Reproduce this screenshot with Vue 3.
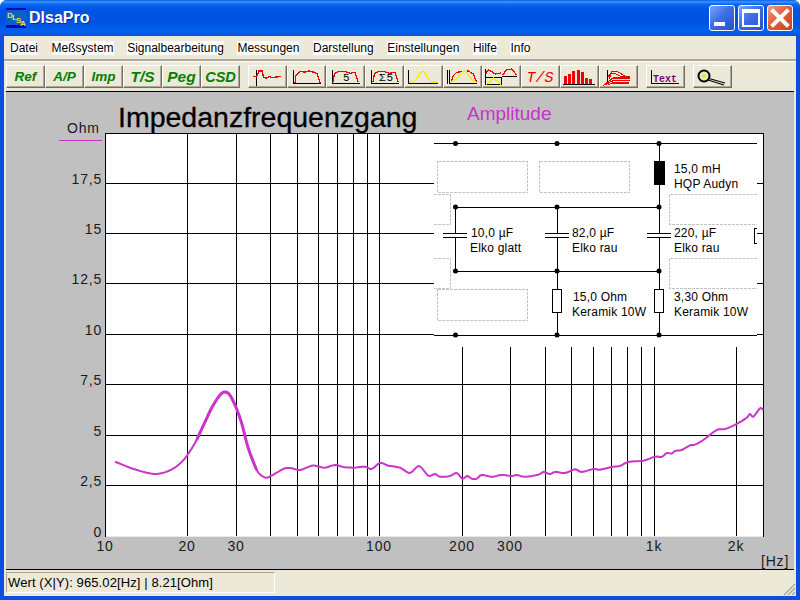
<script setup>
const menus = ['Datei', 'Meßsystem', 'Signalbearbeitung', 'Messungen', 'Darstellung', 'Einstellungen', 'Hilfe', 'Info']
const textButtons = [
  { t: 'Ref', c: 'small' }, { t: 'A/P', c: 'small' }, { t: 'Imp', c: 'small' },
  { t: 'T/S', c: 'big' }, { t: 'Peg', c: 'big' }, { t: 'CSD', c: 'mid' }
]
const hLines = [183, 233, 283, 334, 384, 435, 485]
const vLines = [187, 236, 270, 297, 318, 337, 353, 367, 379, 462, 510, 545, 571, 593, 611, 627, 641, 654, 736]
const yLabels = [['17,5', 184], ['15', 234], ['12,5', 284], ['10', 335], ['7,5', 385], ['5', 436], ['2,5', 486], ['0', 537]]
const xLabels = [['10', 105], ['20', 187], ['30', 236], ['100', 379], ['200', 462], ['300', 510], ['1k', 654], ['2k', 736]]

const left = [[345,275],[390,293],[435,307],[470,312],[505,303],[535,285],[560,258],[590,210],[620,145],[640,105],[665,70],[685,70],[705,105],[725,160],[745,235],[770,300],[790,320],[805,322],[830,308],[855,295],[875,295],[900,300],[935,287],[950,288],[975,293],[1005,285],[1030,291],[1060,293],[1095,290],[1115,297],[1140,279],[1165,287],[1200,293]]
const right = [[30,309],[57,288],[85,317],[105,312],[120,320],[150,318],[170,309],[187,326],[202,318],[215,326],[230,326],[245,315],[275,320],[305,315],[335,318],[350,315],[375,320],[415,314],[430,306],[450,312],[465,306],[495,309],[525,298],[545,306],[580,297],[600,299],[640,290],[660,288],[685,276],[730,272],[765,260],[785,261],[800,249],[815,251],[825,243],[845,240],[870,226],[885,224],[910,210],[950,180],[975,177],[1010,162],[1040,143],[1050,132],[1060,140],[1080,115],[1090,120]]
const toXY = (p, ox) => [p[0] / 3 + ox, p[1] / 3 + 370]
function smooth(pts) {
  const out = []
  for (let i = 0; i < pts.length - 1; i++) {
    const a = pts[Math.max(i - 1, 0)], b = pts[i], c = pts[i + 1], d = pts[Math.min(i + 2, pts.length - 1)]
    for (let k = 0; k < 4; k++) {
      const t = k / 4, t2 = t * t, t3 = t2 * t
      const f = j => 0.5 * (2 * b[j] + (c[j] - a[j]) * t + (2 * a[j] - 5 * b[j] + 4 * c[j] - d[j]) * t2 + (3 * b[j] - a[j] - 3 * c[j] + d[j]) * t3)
      out.push([f(0), f(1)])
    }
  }
  out.push(pts[pts.length - 1])
  return out
}
const str = a => a.map(p => p[0].toFixed(1) + ',' + p[1].toFixed(1)).join(' ')
const curve = str(smooth(left.map(p => toXY(p, 0)).concat(right.map(p => toXY(p, 400)))))
const peak = str(smooth(left.slice(7, 16).map(p => toXY(p, 0))))

const nodes = [[455.5,143.5],[557,143.5],[659,143.5],[455.5,207],[557,207],[659,207],[455.5,271],[557,271],[659,271],[455.5,335],[557,335],[659,335]]
const notes = [
  [674, 173, '15,0 mH'], [674, 188, 'HQP Audyn'],
  [471, 237, '10,0 µF'], [470, 252, 'Elko glatt'],
  [572, 237, '82,0 µF'], [572, 252, 'Elko rau'],
  [674, 237, '220, µF'], [674, 252, 'Elko rau'],
  [573, 301, '15,0 Ohm'], [572, 316, 'Keramik 10W'],
  [674, 301, '3,30 Ohm'], [674, 316, 'Keramik 10W']
]
const bars = [[4,11],[8,9],[12,6],[17,5],[21,7],[25,13],[29,14]]
</script>

<template>
  <div class="window">
    <header class="titlebar">
      <svg class="logo" width="20" height="20" viewBox="0 0 20 20">
        <rect y="1" width="20" height="18" fill="#0d5fc8" />
        <rect width="20" height="2" fill="#0000c8" />
        <rect y="17" width="20" height="3" fill="#0000c8" />
        <text x="1" y="10" class="logo-t">D</text>
        <text x="6" y="12" class="logo-t">L</text>
        <text x="10" y="15" class="logo-t">S</text>
        <text x="14" y="18" class="logo-t">A</text>
      </svg>
      <span class="title">DlsaPro</span>
      <div class="controls">
        <div class="ctl min"><i></i></div>
        <div class="ctl max"><i></i></div>
        <div class="ctl close">
          <svg width="24" height="24" viewBox="0 0 24 24"><path d="M5 5 L19 19 M19 5 L5 19" stroke="#fff" stroke-width="4" stroke-linecap="square" /></svg>
        </div>
      </div>
    </header>

    <div class="inner">
      <nav class="menu">
        <span v-for="m in menus" :key="m" class="menu-item">{{ m }}</span>
      </nav>

      <div class="toolbar">
        <div class="group">
          <button v-for="b in textButtons" :key="b.t" class="btn txt" :class="b.c">{{ b.t }}</button>
        </div>
        <div class="group">
          <button class="btn"><svg viewBox="1 1 37 21"><path d="M8.5 5V21M5 11.5H8" class="k" /><path d="M5 11.5L9 11L11 6H14L15.5 12L18 13.5L21 11.5L24 12.5L33 11.5" class="r" /></svg></button>
          <button class="btn"><svg viewBox="1 1 37 21"><path d="M6.5 5V18.5H34" class="k" /><path d="M8 18L9 10L13 6.5L18 7L22 6L26 7L30 8.5L33 18" class="r" /></svg></button>
          <button class="btn"><svg viewBox="1 1 37 21"><path d="M6.5 5V18.5H34" class="k" /><path d="M7 17L8.3 9L12.3 6.5L19 6.5L24 8.3L29 7.3L32.3 17" class="r" /><text x="17" y="16" class="mono">5</text></svg></button>
          <button class="btn"><svg viewBox="1 1 37 21"><path d="M6.5 5V18.5H34" class="k" /><path d="M8 17L9.3 9L13 6.5L19 6.5L24 8.3L30 7.3L33.3 17" class="r" /><text x="14" y="16" class="mono sp">Σ5</text></svg></button>
          <button class="btn"><svg viewBox="1 1 37 21"><path d="M4.5 5V18.5H34" class="k" /><path d="M5 17.3L11 16L16 8L19.3 6L22.7 10.7L26 16.7L33.7 17.3" class="y" /></svg></button>
          <button class="btn"><svg viewBox="1 1 37 21"><path d="M4.5 5V18.5M6.5 5V18.5H34" class="k" /><path d="M8 17.3L10.3 10.7L13.7 7.3L18.7 6.7L25.3 6L30.3 9L33.7 17.3" class="r" /><path d="M8 17.3L13.7 14L18.7 7.3L22.7 6L27 12.3L32 17.3" class="y" /></svg></button>
          <button class="btn"><svg viewBox="1 1 37 21"><path d="M3.5 4V19.5H19.5V12.5H4M20 11.5H35" class="k" /><path d="M3.7 9L6.3 4.7L9.7 6.7L13 9L19 8" class="r" /><path d="M20.7 10L24.7 4.7L29.7 4L34.7 10" class="r" /><path d="M4 19L7.3 17.3L11.3 13L14.7 15.7L19 19" class="y" /></svg></button>
          <button class="btn"><svg viewBox="1 1 37 21"><text x="5.5" y="17" class="ts">T/S</text></svg></button>
          <button class="btn"><svg viewBox="1 1 37 21">
            <rect v-for="(b, i) in bars" :key="i" :x="b[0]" :y="b[1]" width="3" :height="19 - b[1]" fill="#f00000" />
            <path d="M3 19.5H35" class="k" /></svg></button>
          <button class="btn"><svg viewBox="1 1 37 21"><path d="M8.5 5V19" class="k" /><path d="M4 21L10 16L14 13H31M6 20L11 17L15 15.5H31M9 20L13 18H30M9 12L12 8L17 9L23 12L31 11M10 14L13 6L19 7L26 11" class="r1" /></svg></button>
        </div>
        <div class="group">
          <button class="btn"><svg viewBox="1 1 37 21"><path d="M5.5 5V18.5H33" class="k" /><text x="7" y="17" class="tx">Text</text></svg></button>
        </div>
        <div class="group">
          <button class="btn"><svg viewBox="1 1 37 21" class="aa"><circle cx="11" cy="11" r="5.5" fill="#ece9d8" stroke="#000" stroke-width="2" /><path d="M11 8.5V13.5M8.5 11H13.5" stroke="#eaea00" stroke-width="1.6" /><path d="M16 13.5L32 18M15 15L31 20" stroke="#000" stroke-width="1.2" fill="none" /></svg></button>
        </div>
      </div>

      <svg class="chart" width="788" height="477" viewBox="6 92 788 477">
        <rect x="6" y="92" width="788" height="477" fill="#c0c0c0" />
        <rect x="105" y="133" width="658" height="403" fill="#fff" stroke="#000" stroke-width="1" shape-rendering="crispEdges" />
        <g shape-rendering="crispEdges" stroke="#000" stroke-width="1">
          <line v-for="y in hLines" :key="'h' + y" x1="105" x2="763" :y1="y + 0.5" :y2="y + 0.5" />
          <line v-for="x in vLines" :key="'v' + x" :x1="x + 0.5" :x2="x + 0.5" y1="133" y2="536" />
        </g>
        <line x1="106" x2="763" y1="536.5" y2="536.5" stroke="#e8e8e8" shape-rendering="crispEdges" />

        <text x="118" y="127" class="heading">Impedanzfrequenzgang</text>
        <text x="467" y="120" class="amp">Amplitude</text>
        <text x="67" y="133" class="axis">Ohm</text>
        <line x1="59" x2="102" y1="140.5" y2="140.5" stroke="#c832c8" shape-rendering="crispEdges" />
        <text v-for="l in yLabels" :key="l[0]" x="102" :y="l[1]" class="axis end">{{ l[0] }}</text>
        <text v-for="l in xLabels" :key="l[0]" :x="l[1]" y="551" class="axis mid">{{ l[0] }}</text>
        <text x="761" y="566" class="axis">[Hz]</text>

        <rect x="434" y="134" width="323" height="213" fill="#fff" />
        <g fill="none" stroke="#c4c4c4" stroke-dasharray="3 1" shape-rendering="crispEdges">
          <rect x="437.5" y="161.5" width="90" height="31" />
          <rect x="539.5" y="161.5" width="90" height="31" />
          <path d="M757 194.5H669.5V224.5H757M757 258.5H669.5V288.5H757" />
          <path d="M434 194.5H450.5V224.5H434M434 258.5H450.5V288.5H434" />
          <rect x="437.5" y="289.5" width="90" height="31" />
        </g>
        <g fill="none" stroke="#000" stroke-width="1" shape-rendering="crispEdges">
          <path d="M434 143.5H757M455 207.5H659M455 271.5H659M434 335.5H757" />
          <path d="M455.5 207V233M455.5 238V271M557.5 207V233M557.5 238V335M659.5 143V233M659.5 238V335" />
          <path d="M443 233.5H467M443 237.5H467M545 233.5H569M545 237.5H569M647 233.5H671M647 237.5H671" />
          <path d="M757 228.5H754.5V243.5H757" />
        </g>
        <rect x="654" y="161" width="11" height="24" fill="#000" />
        <rect x="552.5" y="289.5" width="9" height="23" fill="#fff" stroke="#000" shape-rendering="crispEdges" />
        <rect x="654.5" y="289.5" width="9" height="23" fill="#fff" stroke="#000" shape-rendering="crispEdges" />
        <circle v-for="(n, i) in nodes" :key="i" :cx="n[0]" :cy="n[1]" r="2.5" fill="#000" />
        <text v-for="n in notes" :key="n[0] + n[2] + n[1]" :x="n[0]" :y="n[1]" class="note">{{ n[2] }}</text>

        <polyline :points="curve" fill="none" stroke="#cc33cc" stroke-width="2" stroke-linejoin="round" />
        <polyline :points="peak" fill="none" stroke="#cc33cc" stroke-width="3" stroke-linejoin="round" />
      </svg>

      <footer class="status">
        <div class="panel">Wert (X|Y): 965.02[Hz] | 8.21[Ohm]</div>
        <svg class="grip" width="13" height="13" viewBox="0 0 13 13">
          <path d="M12 1L1 12M12 5L5 12M12 9L9 12" stroke="#a8a594" stroke-width="1.2" fill="none" />
        </svg>
      </footer>
    </div>
  </div>
</template>

<style scoped>
.window {
  width: 800px;
  height: 600px;
  display: flex;
  flex-direction: column;
  background: #0a4fe0;
  border-radius: 7px 7px 0 0;
  overflow: hidden;
  box-sizing: border-box;
  font-family: "Liberation Sans", Arial, sans-serif;
}
.titlebar {
  height: 36px;
  flex: none;
  display: flex;
  align-items: center;
  padding: 0 7px 0 6px;
  background: linear-gradient(#0a5fe8 0, #3d95ff 2px, #0a6af0 4px, #0055e5 9px, #0052e0 22px, #0060f0 31px, #0a52d8 36px);
}
.logo { flex: none; }
.logo-t { font: bold 8px "Liberation Sans", sans-serif; fill: #f0e020; }
.title {
  margin-left: 3px;
  color: #fff;
  font-size: 16px;
  font-weight: bold;
  text-shadow: 1px 1px 0 #0a2a9a;
}
.controls { margin-left: auto; display: flex; gap: 3px; }
.ctl {
  width: 26px;
  height: 26px;
  box-sizing: border-box;
  border: 1px solid #fff;
  border-radius: 3px;
  position: relative;
  background: linear-gradient(135deg, #7ea5f5 0%, #3f6fe8 45%, #2450d0 100%);
}
.ctl.close {
  background: linear-gradient(135deg, #f0a080 0%, #e0603a 45%, #c8401c 100%);
  display: flex;
  align-items: center;
  justify-content: center;
}
.ctl.min i {
  position: absolute;
  left: 4px;
  bottom: 4px;
  width: 11px;
  height: 4px;
  background: #fff;
}
.ctl.max i {
  position: absolute;
  left: 3px;
  top: 3px;
  width: 18px;
  height: 18px;
  box-sizing: border-box;
  border: 2px solid #fff;
  border-top-width: 4px;
}
.inner {
  flex: 1;
  margin: 0 4px 4px;
  background: #ece9d8;
  display: flex;
  flex-direction: column;
  min-height: 0;
}
.menu {
  height: 25px;
  flex: none;
  display: flex;
  align-items: center;
  padding-left: 6px;
  box-sizing: border-box;
  border-bottom: 2px solid #aca899;
  font-size: 12px;
  color: #000;
}
.menu-item { background: #fff; line-height: 14px; margin-right: 13.55px; }
.toolbar {
  height: 30px;
  flex: none;
  display: flex;
  align-items: flex-start;
  padding: 3px 0 0 2px;
  box-sizing: border-box;
  gap: 8px;
  border-top: 1px solid #fff;
}
.group { display: flex; }
.btn {
  width: 39px;
  height: 23px;
  padding: 0;
  margin: 0;
  box-sizing: border-box;
  background: #ece9d8;
  border: 1px solid;
  border-color: #fff #716f64 #716f64 #fff;
  box-shadow: inset -1px -1px 0 #aca899;
  display: flex;
  align-items: center;
  justify-content: center;
  overflow: hidden;
}
.btn svg { width: 37px; height: 21px; display: block; shape-rendering: crispEdges; }
.btn svg.aa { shape-rendering: auto; }
.btn.txt {
  font-family: "Liberation Sans", Arial, sans-serif;
  font-style: italic;
  font-weight: bold;
  color: #008000;
}
.btn.small { font-size: 13.5px; }
.btn.big { font-size: 15.5px; }
.btn.mid { font-size: 14.5px; }
.k { fill: none; stroke: #000; stroke-width: 1; }
.r { fill: none; stroke: #f00000; stroke-width: 1.3; }
.r1 { fill: none; stroke: #f00000; stroke-width: 1.1; }
.y { fill: none; stroke: #f0f000; stroke-width: 1.4; }
.mono { font: 11px "Liberation Mono", monospace; fill: #000; }
.mono.sp { letter-spacing: 1px; }
.ts { font: italic 15px "Liberation Mono", monospace; fill: #f00000; }
.tx { font: bold 10px "Liberation Mono", monospace; fill: #800080; }
.chart { display: block; flex: none; margin-left: 2px; border-top: 1px solid #000; border-bottom: 1px solid #000; box-sizing: content-box; }
.heading { font: 28.5px "Liberation Sans", Arial, sans-serif; fill: #000; stroke: #000; stroke-width: 0.3; }
.amp { font: 19px "Liberation Sans", Arial, sans-serif; fill: #c832c8; }
.axis { font: 14px "Liberation Sans", Arial, sans-serif; fill: #1a1a1a; letter-spacing: 0.8px; }
.axis.end { text-anchor: end; }
.axis.mid { text-anchor: middle; }
.note { font: 12px "Liberation Sans", Arial, sans-serif; fill: #000; letter-spacing: 0.2px; }
.status {
  flex: 1;
  position: relative;
  display: flex;
  padding: 2px 0 3px 2px;
  box-sizing: border-box;
  font-size: 13px;
  letter-spacing: 0.1px;
  color: #000;
}
.panel {
  width: 269px;
  box-sizing: border-box;
  border: 1px solid;
  border-color: #aca899 #fff #fff #aca899;
  padding-left: 1px;
  line-height: 19px;
  white-space: nowrap;
}
.grip { position: absolute; right: 0; bottom: 0; }
</style>
<style>
html, body { background: #fff; }
</style>
